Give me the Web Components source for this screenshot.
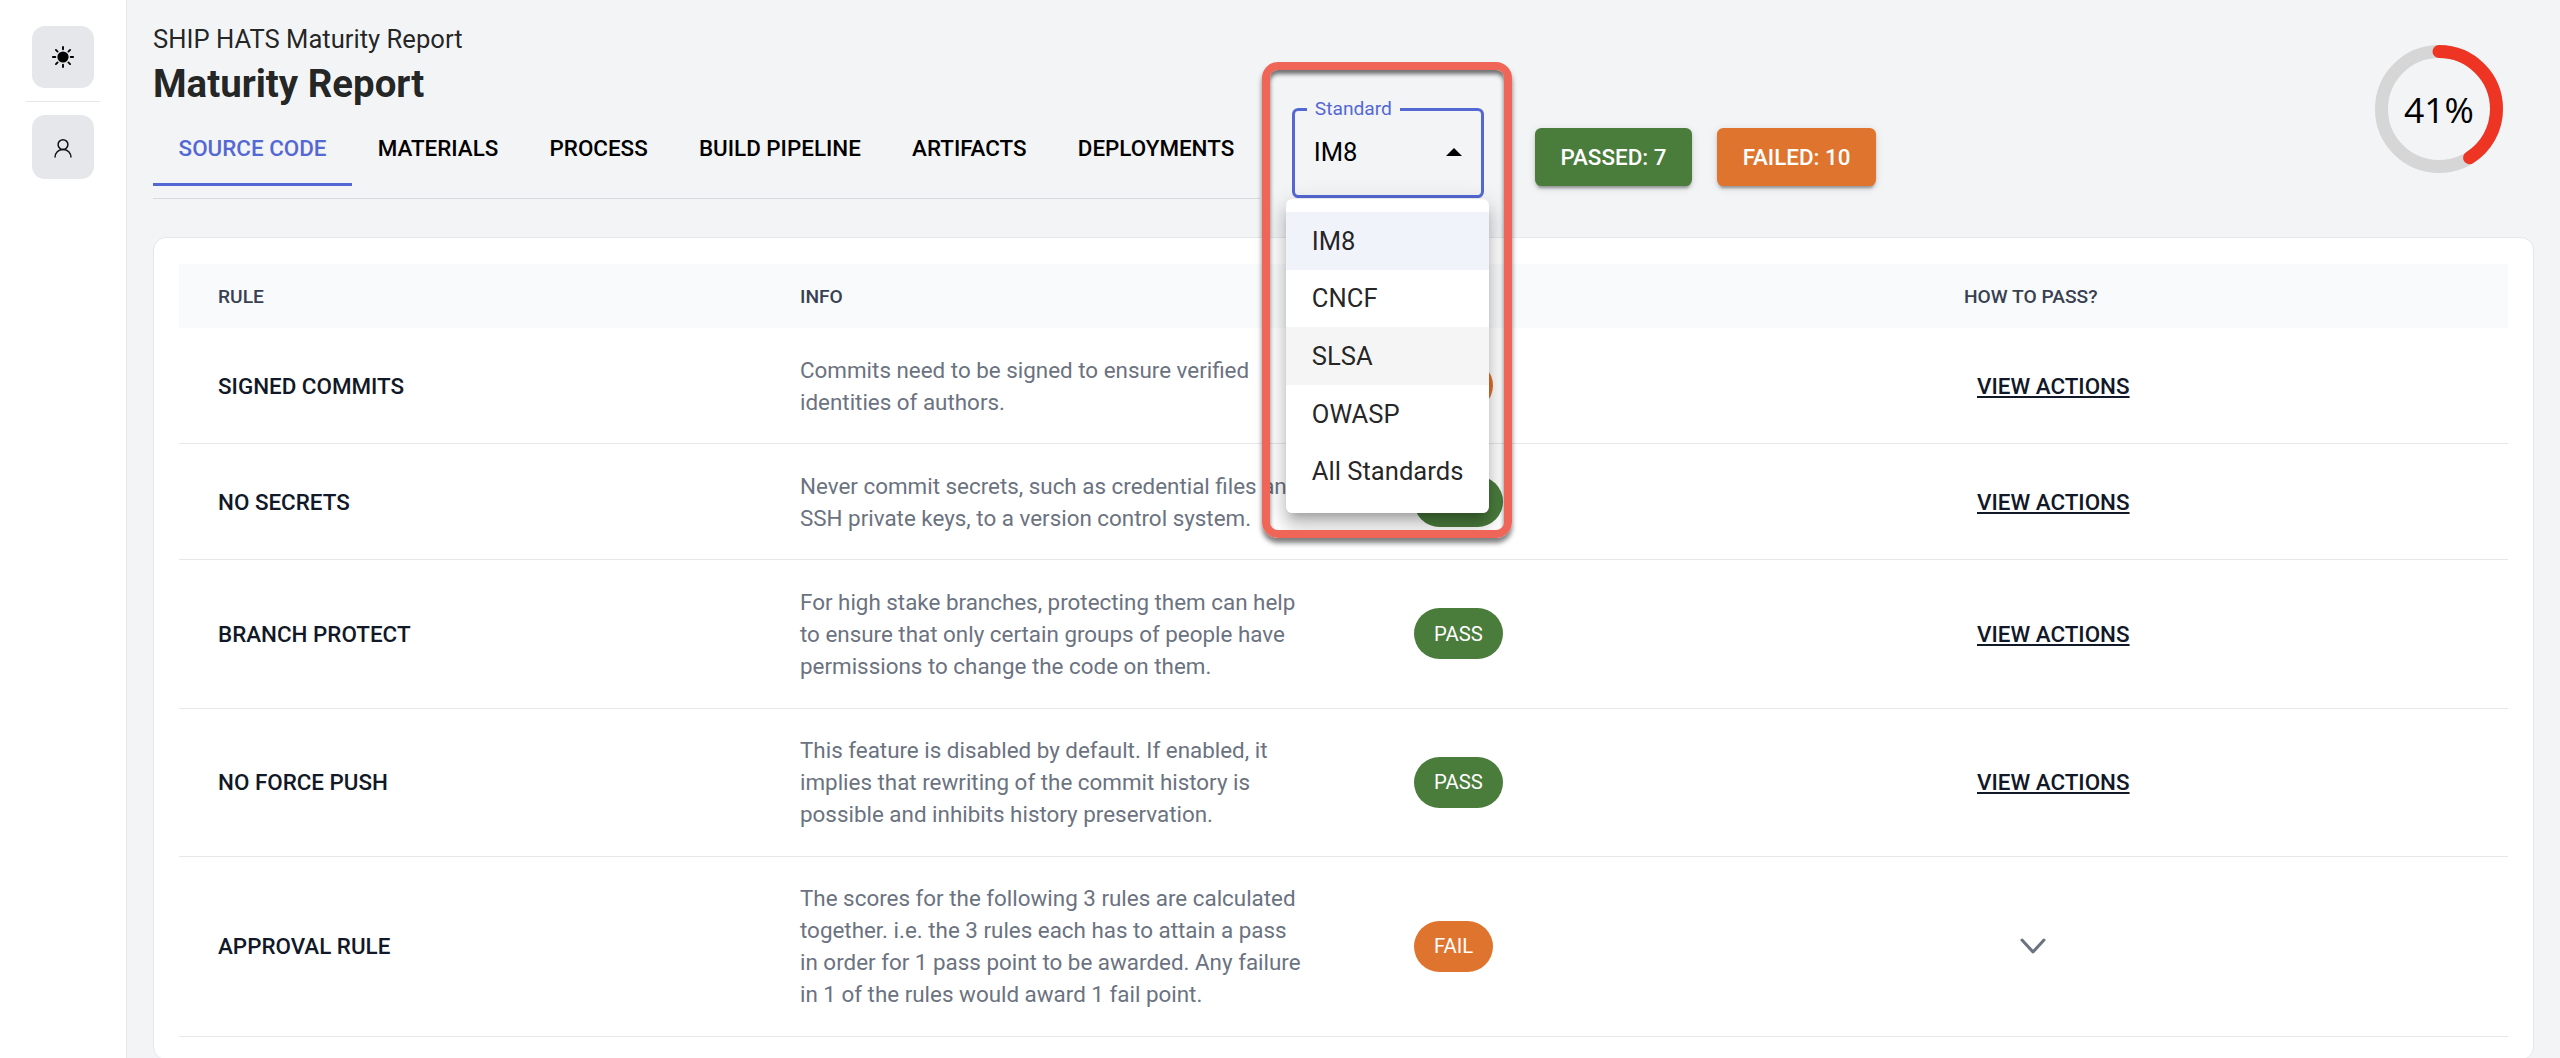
<!DOCTYPE html>
<html>
<head>
<meta charset="utf-8">
<title>Maturity Report</title>
<style>
  html, body { margin: 0; height: 100%; background: #f3f4f6; overflow: hidden; }
  body { font-family: Roboto, "Liberation Sans", sans-serif; }
</style>
</head>
<body>
<report-page></report-page>

<script>
class SideNav extends HTMLElement {
    connectedCallback() {
        this.attachShadow({ mode: 'open' });
        this.shadowRoot.innerHTML = `
            <style>
                :host {
                    display: flex;
                    flex-direction: column;
                    align-items: center;
                    box-sizing: border-box;
                    width: 127px;
                    flex: none;
                    padding-top: 26px;
                    background: #fff;
                    border-right: 1px solid #e5e7eb;
                }
                .btn {
                    width: 62px;
                    height: 62px;
                    border-radius: 13px;
                    background: #e5e7eb;
                    display: flex;
                    align-items: center;
                    justify-content: center;
                }
                .btn + hr + .btn { height: 64px; }
                hr {
                    width: 74px;
                    height: 1px;
                    margin: 13px 0;
                    border: 0;
                    background: #e5e7eb;
                }
            </style>
            <div class="btn">
                <svg width="24" height="24" viewBox="0 0 24 24" fill="none" stroke="#000" stroke-width="1.9" stroke-linecap="round">
                    <circle cx="12" cy="12" r="5.6" fill="#000" stroke="none"/>
                    <path d="M12 1.9v2.4M12 19.7v2.4M1.9 12h2.4M19.7 12h2.4M4.9 4.9l1.7 1.7M17.4 17.4l1.7 1.7M4.9 19.1l1.7-1.7M17.4 6.6l1.7-1.7"/>
                </svg>
            </div>
            <hr>
            <div class="btn">
                <svg width="24" height="24" viewBox="0 0 24 24" fill="none" stroke="#111" stroke-width="1.5">
                    <circle cx="12" cy="9.6" r="4.9"/>
                    <path d="M4 22.5c0-4.6 3.3-8 8-8s8 3.4 8 8"/>
                </svg>
            </div>
        `;
    }
}

class TabBar extends HTMLElement {
    connectedCallback() {
        this.attachShadow({ mode: 'open' });
        const tabs = ['SOURCE CODE', 'MATERIALS', 'PROCESS', 'BUILD PIPELINE', 'ARTIFACTS', 'DEPLOYMENTS'];
        this.shadowRoot.innerHTML = `
            <style>
                :host {
                    display: flex;
                    padding-bottom: 12px;
                    border-bottom: 1px solid #d8dade;
                }
                .tab {
                    height: 76px;
                    box-sizing: border-box;
                    padding: 0 25.6px;
                    display: flex;
                    align-items: center;
                    font-size: 22.4px;
                    font-weight: 500;
                    color: #000;
                    white-space: nowrap;
                }
                .tab.active {
                    color: #5468d4;
                    box-shadow: inset 0 -3px 0 #5468d4;
                }
            </style>
            ${tabs.map((t, i) => `<div class="tab ${i === 0 ? 'active' : ''}">${t}</div>`).join('')}
        `;
    }
}

class StandardSelect extends HTMLElement {
    connectedCallback() {
        this.attachShadow({ mode: 'open' });
        const options = ['IM8', 'CNCF', 'SLSA', 'OWASP', 'All Standards'];
        this.shadowRoot.innerHTML = `
            <style>
                :host {
                    display: block;
                    position: relative;
                    z-index: 10;
                    box-sizing: border-box;
                    width: 192px;
                    height: 90px;
                    border: 3.2px solid #5468d4;
                    border-radius: 6.4px;
                    color: #000;
                }
                .label {
                    position: absolute;
                    left: 12px;
                    top: -15px;
                    padding: 0 8px;
                    background: #f3f4f6;
                    color: #5468d4;
                    font-size: 19.2px;
                    line-height: 25px;
                }
                .value {
                    display: flex;
                    align-items: center;
                    justify-content: space-between;
                    box-sizing: border-box;
                    height: 100%;
                    padding: 0 19px 3px 19px;
                    font-size: 25.6px;
                }
                .arrow {
                    width: 0;
                    height: 0;
                    border-left: 8px solid transparent;
                    border-right: 8px solid transparent;
                    border-bottom: 8px solid #000;
                }
                .menu {
                    position: absolute;
                    left: -9px;
                    top: 88px;
                    width: 203px;
                    box-sizing: border-box;
                    padding: 13px 0;
                    background: #fff;
                    border-radius: 6.4px;
                    color: rgba(0, 0, 0, 0.87);
                    box-shadow: 0 8px 8px -5px rgba(0,0,0,.2), 0 13px 16px 2px rgba(0,0,0,.14), 0 5px 22px 3px rgba(0,0,0,.12);
                }
                .option {
                    height: 57.6px;
                    display: flex;
                    align-items: center;
                    padding: 0 26px;
                    font-size: 25.6px;
                    white-space: nowrap;
                }
                .option.selected { background: #f1f3fb; }
                .option.hover { background: #f5f5f5; }
                .frame {
                    position: absolute;
                    left: -33px;
                    top: -49px;
                    width: 250px;
                    height: 476px;
                    box-sizing: border-box;
                    border: 8px solid #ef6557;
                    border-radius: 16px;
                    box-shadow: 0 5px 5px rgba(0,0,0,.5), inset 0 4px 4px rgba(0,0,0,.55);
                    pointer-events: none;
                }
            </style>
            <div class="label">Standard</div>
            <div class="value"><span>IM8</span><span class="arrow"></span></div>
            <div class="menu">
                ${options.map((o, i) => `<div class="option ${i === 0 ? 'selected' : i === 2 ? 'hover' : ''}">${o}</div>`).join('')}
            </div>
            <div class="frame"></div>
        `;
    }
}

class StatButton extends HTMLElement {
    connectedCallback() {
        this.attachShadow({ mode: 'open' });
        this.shadowRoot.innerHTML = `
            <style>
                :host {
                    display: block;
                    padding: 9.6px 25.6px;
                    border-radius: 6.4px;
                    font-size: 22.4px;
                    font-weight: 500;
                    line-height: 39px;
                    color: #fff;
                    white-space: nowrap;
                    background: var(--bg);
                    box-shadow: 0 5px 2px -3px rgba(0,0,0,.2), 0 3px 3px 0 rgba(0,0,0,.14), 0 2px 8px 0 rgba(0,0,0,.12);
                }
            </style>
            <slot></slot>
        `;
    }
}

class ScoreRing extends HTMLElement {
    connectedCallback() {
        this.attachShadow({ mode: 'open' });
        const pct = Number(this.getAttribute('value'));
        const r = 57.5;
        const c = 2 * Math.PI * r;
        this.shadowRoot.innerHTML = `
            <style>
                :host {
                    display: block;
                    position: relative;
                    width: 128px;
                    height: 128px;
                }
                svg { display: block; transform: rotate(-90deg); }
                .text {
                    position: absolute;
                    inset: 0;
                    display: flex;
                    align-items: center;
                    justify-content: center;
                    font-family: "Open Sans", sans-serif;
                    font-size: 35.5px;
                    color: #000;
                }
            </style>
            <svg width="128" height="128" viewBox="0 0 128 128" fill="none" stroke-width="13">
                <circle cx="64" cy="64" r="${r}" stroke="#d6d6d6"/>
                <circle cx="64" cy="64" r="${r}" stroke="#ee3524" stroke-linecap="round"
                    stroke-dasharray="${c * pct / 100} ${c}"/>
            </svg>
            <div class="text">${pct}%</div>
        `;
    }
}

class RuleTable extends HTMLElement {
    connectedCallback() {
        this.attachShadow({ mode: 'open' });
        this.shadowRoot.innerHTML = `
            <style>
                :host {
                    display: block;
                    box-sizing: border-box;
                    margin-top: 38px;
                    padding: 26px 25px;
                    height: 823px;
                    background: #fff;
                    border: 1px solid #e5e7eb;
                    border-radius: 13px;
                }
                .head {
                    display: grid;
                    grid-template-columns: 582px 614px 550px 1fr;
                    height: 64px;
                    align-items: center;
                    background: #f9fafb;
                    font-size: 19.2px;
                    font-weight: 500;
                    color: #374151;
                }
                .head div { padding-left: 39px; }
            </style>
            <div class="head">
                <div>RULE</div><div>INFO</div><div></div><div>HOW TO PASS?</div>
            </div>
            <slot></slot>
        `;
    }
}

class RuleRow extends HTMLElement {
    connectedCallback() {
        this.attachShadow({ mode: 'open' });
        const status = this.getAttribute('status');
        const expand = this.hasAttribute('expand');
        this.shadowRoot.innerHTML = `
            <style>
                :host {
                    display: grid;
                    grid-template-columns: 582px 614px 550px 1fr;
                    align-items: center;
                    padding: 25.6px 0;
                    border-bottom: 1px solid #e5e7eb;
                }
                .name {
                    padding-left: 39px;
                    font-size: 22.4px;
                    font-weight: 500;
                    color: #111827;
                }
                .info {
                    padding-left: 39px;
                    font-size: 22.4px;
                    line-height: 32px;
                    color: #6b7280;
                    white-space: nowrap;
                }
                .pill {
                    justify-self: start;
                    margin-left: 39px;
                    height: 51px;
                    padding: 0 20px;
                    display: flex;
                    align-items: center;
                    border-radius: 26px;
                    font-size: 20.3px;
                    color: #fff;
                }
                .pass { background: #4a7c3c; }
                .fail { background: #df742e; }
                .action {
                    margin-left: 52px;
                    font-size: 22.4px;
                    font-weight: 500;
                    color: #111827;
                    text-decoration: underline;
                }
                svg { display: block; margin-left: 95px; }
            </style>
            <div class="name">${this.getAttribute('name')}</div>
            <div class="info"><slot></slot></div>
            <div class="pill ${status.toLowerCase()}">${status}</div>
            ${expand
                ? `<svg width="26" height="16" viewBox="0 0 26 16" fill="none" stroke="#6b7280" stroke-width="3" stroke-linecap="round" stroke-linejoin="round"><path d="M2 2l11 12L24 2"/></svg>`
                : `<div class="action">VIEW ACTIONS</div>`}
        `;
    }
}

class ReportPage extends HTMLElement {
    connectedCallback() {
        this.attachShadow({ mode: 'open' });
        this.shadowRoot.innerHTML = `
            <style>
                :host {
                    display: flex;
                    height: 1058px;
                    overflow: hidden;
                    background: #f3f4f6;
                    font-family: Roboto, "Liberation Sans", sans-serif;
                }
                main {
                    flex: 1;
                    min-width: 0;
                    box-sizing: border-box;
                    padding: 0 26px;
                }
                .top { display: flex; align-items: flex-start; }
                .titles { flex: none; }
                .sub {
                    margin-top: 22px;
                    font-size: 25.6px;
                    line-height: 34px;
                    color: rgba(0, 0, 0, 0.87);
                }
                h1 {
                    margin: 3px 0 2px;
                    font-size: 38.4px;
                    line-height: 49px;
                    font-weight: 700;
                    color: rgba(0, 0, 0, 0.87);
                }
                standard-select { margin: 108px 0 0 32px; flex: none; }
                .stats { display: flex; gap: 25px; margin: 128px 0 0 51px; }
                stat-button.ok { --bg: #4a7c3c; }
                stat-button.bad { --bg: #df742e; }
                score-ring { margin: 45px 31px 0 auto; flex: none; }
            </style>
            <side-nav></side-nav>
            <main>
                <div class="top">
                    <div class="titles">
                        <div class="sub">SHIP HATS Maturity Report</div>
                        <h1>Maturity Report</h1>
                        <tab-bar></tab-bar>
                    </div>
                    <standard-select></standard-select>
                    <div class="stats">
                        <stat-button class="ok">PASSED: 7</stat-button>
                        <stat-button class="bad">FAILED: 10</stat-button>
                    </div>
                    <score-ring value="41"></score-ring>
                </div>
                <rule-table>
                    <rule-row name="SIGNED COMMITS" status="FAIL">Commits need to be signed to ensure verified<br>identities of authors.</rule-row>
                    <rule-row name="NO SECRETS" status="PASS">Never commit secrets, such as credential files and<br>SSH private keys, to a version control system.</rule-row>
                    <rule-row name="BRANCH PROTECT" status="PASS">For high stake branches, protecting them can help<br>to ensure that only certain groups of people have<br>permissions to change the code on them.</rule-row>
                    <rule-row name="NO FORCE PUSH" status="PASS">This feature is disabled by default. If enabled, it<br>implies that rewriting of the commit history is<br>possible and inhibits history preservation.</rule-row>
                    <rule-row name="APPROVAL RULE" status="FAIL" expand>The scores for the following 3 rules are calculated<br>together. i.e. the 3 rules each has to attain a pass<br>in order for 1 pass point to be awarded. Any failure<br>in 1 of the rules would award 1 fail point.</rule-row>
                </rule-table>
            </main>
        `;
    }
}

customElements.define('side-nav', SideNav);
customElements.define('tab-bar', TabBar);
customElements.define('standard-select', StandardSelect);
customElements.define('stat-button', StatButton);
customElements.define('score-ring', ScoreRing);
customElements.define('rule-table', RuleTable);
customElements.define('rule-row', RuleRow);
customElements.define('report-page', ReportPage);
</script>
</body>
</html>
